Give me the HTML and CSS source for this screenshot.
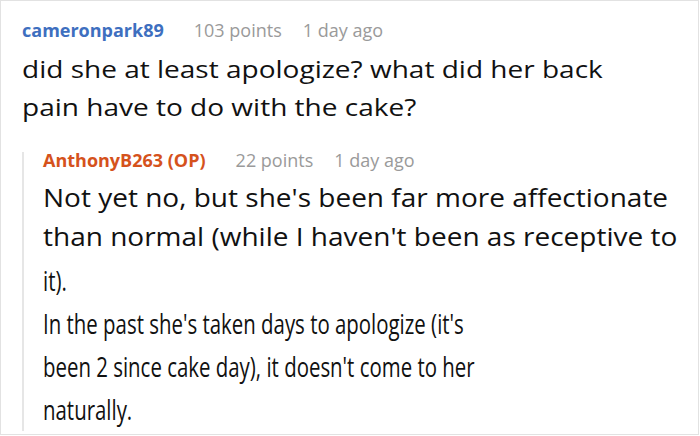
FILE: index.html
```html
<!DOCTYPE html>
<html>
<head>
<meta charset="utf-8">
<link rel="stylesheet" href="styles.css">
</head>
<body>
<div class="frame">
  <div class="comment">
    <div class="meta">
      <span class="user user-blue">cameronpark89</span>
      <span class="info">103 points</span>
      <span class="info">1 day ago</span>
    </div>
    <div class="text text-top">did she at least apologize? what did her back<br>pain have to do with the cake?</div>
    <div class="reply">
      <div class="meta">
        <span class="user user-orange">AnthonyB263 (OP)</span>
        <span class="info">22 points</span>
        <span class="info">1 day ago</span>
      </div>
      <div class="text text-reply">Not yet no, but she's been far more affectionate<br>than normal (while I haven't been as receptive to</div>
      <div class="text condensed">it).<br>In the past she's taken days to apologize (it's<br>been 2 since cake day), it doesn't come to her<br>naturally.</div>
    </div>
  </div>
</div>
</body>
</html>
```

FILE: styles.css
```css
html, body {
  margin: 0;
  padding: 0;
  background: #ffffff;
}
.frame {
  box-sizing: border-box;
  width: 699px;
  height: 435px;
  border: 1px solid #e2e2e2;
  overflow: hidden;
  font-family: "Open Sans", "Noto Sans", sans-serif;
}
.comment {
  padding: 21px 0 0 21px;
}
.meta {
  display: flex;
  gap: 21px;
  font-size: 18px;
  line-height: 16px;
}
.user {
  font-weight: 700;
  margin-right: 9px;
}
.user-blue {
  color: #3e6fbf;
}
.user-orange {
  color: #d5521c;
}
.info {
  color: #9a9a9a;
}
.text {
  color: #111111;
  white-space: nowrap;
  transform-origin: 0 0;
}
.text-top {
  font-size: 23px;
  line-height: 38px;
  margin-top: 12px;
  transform: scaleX(1.218);
}
.reply {
  margin-top: 26px;
  border-left: 2px solid #e6e6e6;
  padding-left: 19px;
}
.text-reply {
  font-size: 26px;
  line-height: 38.5px;
  margin-top: 10px;
  transform: scaleX(1.077);
}
.condensed {
  font-size: 27px;
  line-height: 43px;
  transform: scaleX(0.756);
  margin-top: 4px;
  margin-bottom: -14px;
}
```
